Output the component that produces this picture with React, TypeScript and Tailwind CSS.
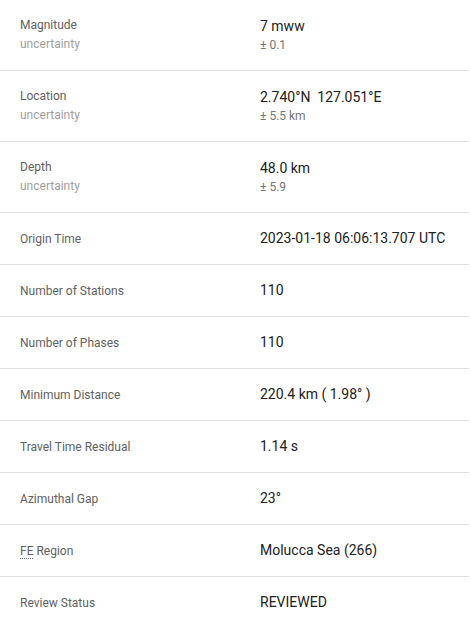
const detailed = [
  { label: "Magnitude", value: "7 mww", unc: "± 0.1" },
  { label: "Location", value: "2.740°N\u00a0\u00a0127.051°E", unc: "± 5.5 km" },
  { label: "Depth", value: "48.0 km", unc: "± 5.9" },
];

const simple = [
  { label: "Origin Time", value: "2023-01-18 06:06:13.707 UTC" },
  { label: "Number of Stations", value: "110" },
  { label: "Number of Phases", value: "110" },
  { label: "Minimum Distance", value: "220.4 km ( 1.98° )" },
  { label: "Travel Time Residual", value: "1.14 s" },
  { label: "Azimuthal Gap", value: "23°" },
  { label: "FE Region", value: "Molucca Sea (266)" },
  { label: "Review Status", value: "REVIEWED" },
];

const App = () => (
  <div className="w-[470px] h-[624px] overflow-hidden bg-white font-['Roboto',sans-serif]">
    <dl className="w-[469px]">
      {detailed.map((r) => (
        <div key={r.label} className="flex items-center h-[71px] border-b border-[#e0e0e0] px-5">
          <dt className="w-[240px] shrink-0">
            <div className="text-[12px] leading-[19px] text-[#616161]">{r.label}</div>
            <div className="text-[12px] leading-[19px] text-[#9e9e9e]">uncertainty</div>
          </dt>
          <dd className="whitespace-nowrap">
            <div className="text-[14px] leading-[20px] text-[#212121]">{r.value}</div>
            <div className="text-[12px] leading-[18px] text-[#757575]">{r.unc}</div>
          </dd>
        </div>
      ))}
      {simple.map((r) => (
        <div key={r.label} className="flex items-center h-[52px] border-b border-[#e0e0e0] px-5">
          <dt className="w-[240px] shrink-0 text-[12px] text-[#616161]">
            {r.label === "FE Region" ? (
              <>
                <abbr title="Flinn-Engdahl" className="no-underline border-b border-dotted border-[#616161]">
                  FE
                </abbr>{" "}
                Region
              </>
            ) : (
              r.label
            )}
          </dt>
          <dd className="whitespace-nowrap text-[14px] text-[#212121]">{r.value}</dd>
        </div>
      ))}
    </dl>
  </div>
);

export default App;
